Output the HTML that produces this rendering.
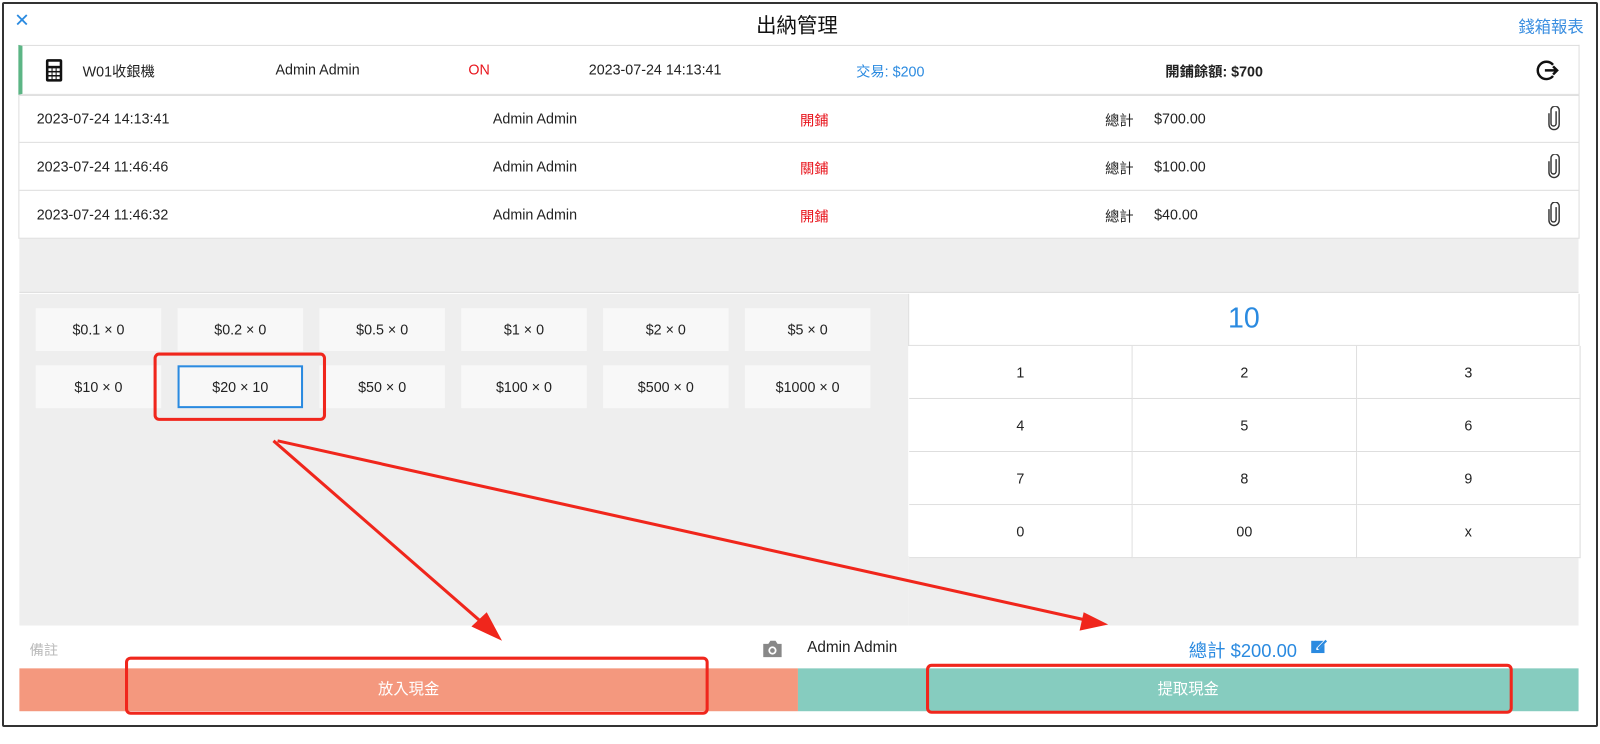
<!DOCTYPE html>
<html><head><meta charset="utf-8"><style>
*{box-sizing:border-box;margin:0;padding:0}
body{width:1600px;height:729px;background:#fff;font-family:"Liberation Sans","Noto Sans CJK TC",sans-serif;font-size:14px;color:#222;position:relative;overflow:hidden}
.frame{position:absolute;left:2px;top:2px;width:1596px;height:725px;border:2px solid #333;border-radius:2px}
.wrap{position:absolute;left:0;top:0;width:1568px;height:715px;transform:scale(1.0204);transform-origin:0 0}
.abs{position:absolute}
.row{position:absolute;left:18px;width:1530px;background:#fff}
.t{position:absolute;white-space:nowrap}
.den{position:absolute;width:123px;height:42px;background:#f8f8f8;text-align:center;line-height:42px;font-size:14px}
.key{position:absolute;height:52px;text-align:center;line-height:52px;border-right:1px solid #ddd;border-bottom:1px solid #ddd;background:#fff;font-size:14px}
</style></head><body>
<div class="frame"></div>
<div class="wrap">
<div class="t" style="left:14px;top:10px;color:#2a8ae0;font-size:18px">✕</div>
<div class="t" style="left:741px;top:9px;font-size:20px;color:#111">出納管理</div>
<div class="t" style="left:1488px;top:13px;font-size:16px;color:#3a8ee0">錢箱報表</div>

<div class="row" style="top:44px;height:49px;border:1px solid #ddd;border-left:4px solid #5cb585">
<svg class="abs" style="left:22px;top:12px" width="18" height="24" viewBox="0 0 18 24"><rect x="1" y="1" width="16" height="22" rx="2" fill="#111"/><rect x="3.5" y="3.5" width="11" height="4" fill="#fff"/><g fill="#fff"><rect x="3.5" y="10" width="3" height="2.5"/><rect x="7.5" y="10" width="3" height="2.5"/><rect x="11.5" y="10" width="3" height="2.5"/><rect x="3.5" y="14" width="3" height="2.5"/><rect x="7.5" y="14" width="3" height="2.5"/><rect x="11.5" y="14" width="3" height="2.5"/><rect x="3.5" y="18" width="3" height="2.5"/><rect x="7.5" y="18" width="3" height="2.5"/><rect x="11.5" y="18" width="3" height="2.5"/></g></svg>
<div class="t" style="left:59px;top:15px">W01收銀機</div>
<div class="t" style="left:248px;top:15px">Admin Admin</div>
<div class="t" style="left:437px;top:15px;color:#e8141c">ON</div>
<div class="t" style="left:555px;top:15px">2023-07-24 14:13:41</div>
<div class="t" style="left:817px;top:15px;color:#2a8ae0">交易: $200</div>
<div class="t" style="left:1120px;top:15px;font-weight:bold">開鋪餘額: $700</div>
<svg class="abs" style="left:1483px;top:12px" width="24" height="24" viewBox="0 0 24 24" fill="none" stroke="#111" stroke-width="2.4"><path d="M17 6.5A8.5 8.5 0 1 0 17 17.5"/><path d="M9 12h12M17 8l4 4-4 4"/></svg>
</div>

<div class="row" style="top:93px;height:141px;border:1px solid #ddd"></div>
<div class="abs" style="left:19px;top:139px;width:1528px;height:1px;background:#ddd"></div>
<div class="abs" style="left:19px;top:186px;width:1528px;height:1px;background:#ddd"></div>
<div class="t" style="left:36px;top:108px">2023-07-24 14:13:41</div>
<div class="t" style="left:36px;top:155px">2023-07-24 11:46:46</div>
<div class="t" style="left:36px;top:202px">2023-07-24 11:46:32</div>
<div class="t" style="left:483px;top:108px">Admin Admin</div>
<div class="t" style="left:483px;top:155px">Admin Admin</div>
<div class="t" style="left:483px;top:202px">Admin Admin</div>
<div class="t" style="left:784px;top:108px;color:#e8141c">開鋪</div>
<div class="t" style="left:784px;top:155px;color:#e8141c">關鋪</div>
<div class="t" style="left:784px;top:202px;color:#e8141c">開鋪</div>
<div class="t" style="left:1083px;top:108px">總計</div><div class="t" style="left:1131px;top:108px">$700.00</div>
<div class="t" style="left:1083px;top:155px">總計</div><div class="t" style="left:1131px;top:155px">$100.00</div>
<div class="t" style="left:1083px;top:202px">總計</div><div class="t" style="left:1131px;top:202px">$40.00</div>
<svg class="abs" style="left:1516px;top:104px" width="14" height="24" viewBox="0 0 14 24" fill="none" stroke="#333" stroke-width="1.4"><path d="M9 5v12a2.5 2.5 0 0 1-5 0V4a4 4 0 0 1 8 0v14a5 5 0 0 1-10 0V7"/></svg>
<svg class="abs" style="left:1516px;top:151px" width="14" height="24" viewBox="0 0 14 24" fill="none" stroke="#333" stroke-width="1.4"><path d="M9 5v12a2.5 2.5 0 0 1-5 0V4a4 4 0 0 1 8 0v14a5 5 0 0 1-10 0V7"/></svg>
<svg class="abs" style="left:1516px;top:198px" width="14" height="24" viewBox="0 0 14 24" fill="none" stroke="#333" stroke-width="1.4"><path d="M9 5v12a2.5 2.5 0 0 1-5 0V4a4 4 0 0 1 8 0v14a5 5 0 0 1-10 0V7"/></svg>

<div class="abs" style="left:19px;top:234px;width:1528px;height:53px;background:#eee;border-bottom:1px solid #ddd"></div>
<div class="abs" style="left:19px;top:288px;width:871px;height:325px;background:#eee"></div>
<div class="abs" style="left:890px;top:545px;width:657px;height:68px;background:#eee"></div>

<div class="den" style="left:35px;top:302px">$0.1 × 0</div>
<div class="den" style="left:174px;top:302px">$0.2 × 0</div>
<div class="den" style="left:313px;top:302px">$0.5 × 0</div>
<div class="den" style="left:452px;top:302px">$1 × 0</div>
<div class="den" style="left:591px;top:302px">$2 × 0</div>
<div class="den" style="left:730px;top:302px">$5 × 0</div>
<div class="den" style="left:35px;top:358px">$10 × 0</div>
<div class="den" style="left:174px;top:358px;border:2px solid #2a8ae0;line-height:38px">$20 × 10</div>
<div class="den" style="left:313px;top:358px">$50 × 0</div>
<div class="den" style="left:452px;top:358px">$100 × 0</div>
<div class="den" style="left:591px;top:358px">$500 × 0</div>
<div class="den" style="left:730px;top:358px">$1000 × 0</div>

<div class="abs" style="left:890px;top:288px;width:658px;height:51px;background:#fff;border-left:1px solid #ddd;border-right:1px solid #ddd;border-bottom:1px solid #ddd;text-align:center;font-size:28px;line-height:48px;color:#2a8ae0">10</div>
<div style="position:absolute;left:890px;top:339px;width:658px;border-left:1px solid #ddd">
<div class="key" style="left:0;top:0;width:219px">1</div><div class="key" style="left:219px;top:0;width:220px">2</div><div class="key" style="left:439px;top:0;width:219px">3</div>
<div class="key" style="left:0;top:52px;width:219px">4</div><div class="key" style="left:219px;top:52px;width:220px">5</div><div class="key" style="left:439px;top:52px;width:219px">6</div>
<div class="key" style="left:0;top:104px;width:219px">7</div><div class="key" style="left:219px;top:104px;width:220px">8</div><div class="key" style="left:439px;top:104px;width:219px">9</div>
<div class="key" style="left:0;top:156px;width:219px">0</div><div class="key" style="left:219px;top:156px;width:220px">00</div><div class="key" style="left:439px;top:156px;width:219px">x</div>
</div>

<div class="t" style="left:29px;top:627px;color:#bbb">備註</div>
<svg class="abs" style="left:746px;top:627px" width="22" height="18" viewBox="0 0 22 18"><path d="M2 4h5l2-3h5l2 3h4v13H2z" fill="#888"/><circle cx="11" cy="10.5" r="4" fill="#fff"/><circle cx="11" cy="10.5" r="2.3" fill="#888"/></svg>
<div class="t" style="left:791px;top:626px;font-size:15px">Admin Admin</div>
<div class="t" style="left:1165px;top:624px;font-size:18px;color:#2a8ae0">總計 $200.00</div>
<svg class="abs" style="left:1284px;top:625px" width="18" height="16" viewBox="0 0 18 16"><rect x="1" y="3" width="13" height="12" fill="#2a8ae0"/><path d="M6 10l8-8 2 2-8 8H6z" fill="#fff"/><path d="M7 10l8-8 1.5 1.5-8 8z" fill="#2a8ae0"/></svg>

<div class="abs" style="left:19px;top:655px;width:763px;height:42px;background:#f4987e;color:#fff;text-align:center;line-height:42px;font-size:15px">放入現金</div>
<div class="abs" style="left:782px;top:655px;width:765px;height:42px;background:#86ccbf;color:#fff;text-align:center;line-height:42px;font-size:15px">提取現金</div>

<svg class="abs" style="left:0;top:0" width="1600" height="729">
<g fill="none" stroke="#f0261c" stroke-width="3">
<rect x="152" y="347" width="166" height="64" rx="4"/>
<rect x="124" y="645" width="569" height="54" rx="4"/>
<rect x="909" y="652" width="572" height="46" rx="4"/>
<line x1="268" y1="432" x2="478" y2="615"/>
<line x1="272" y1="432" x2="1070" y2="609"/>
</g>
<polygon points="492,628 462,614 477,600" fill="#f0261c"/>
<polygon points="1086,612 1062,600 1058,618" fill="#f0261c"/>
</svg>
</div>
</body></html>
